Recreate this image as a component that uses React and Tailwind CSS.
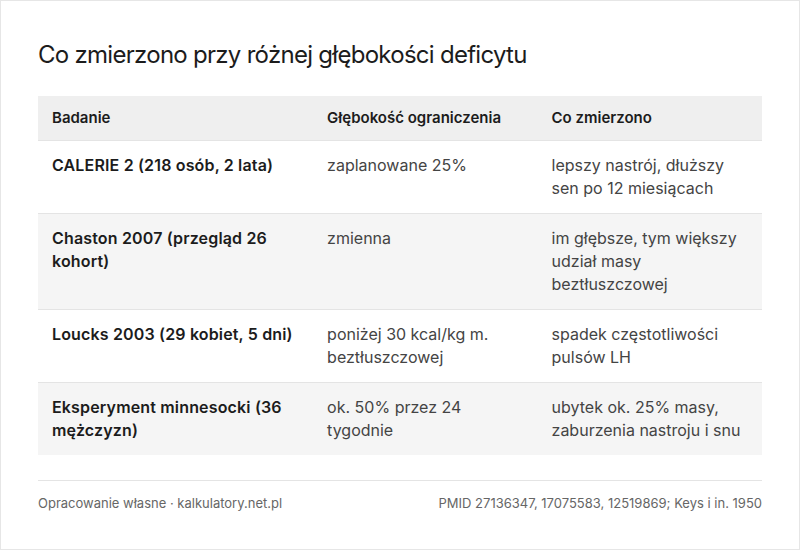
const rows = [
    {
        study: "CALERIE 2 (218 osób, 2 lata)",
        depth: "zaplanowane 25%",
        result: "lepszy nastrój, dłuższy sen po 12 miesiącach",
    },
    {
        study: "Chaston 2007 (przegląd 26 kohort)",
        depth: "zmienna",
        result: "im głębsze, tym większy udział masy beztłuszczowej",
    },
    {
        study: "Loucks 2003 (29 kobiet, 5 dni)",
        depth: "poniżej 30 kcal/kg m. beztłuszczowej",
        result: "spadek częstotliwości pulsów LH",
    },
    {
        study: "Eksperyment minnesocki (36 mężczyzn)",
        depth: "ok. 50% przez 24 tygodnie",
        result: "ubytek ok. 25% masy, zaburzenia nastroju i snu",
    },
];

export default function App() {
    return (
        <div className="w-[800px] h-[551px] bg-white font-['Inter',sans-serif]">
            <div className="h-[550px] border border-[#e6e6e6] px-[37px] pt-[38px]">
                <h1 className="text-[24px] leading-8 tracking-[-0.03em] text-[#1c1c1c] mb-[25px]">
                    Co zmierzono przy różnej głębokości deficytu
                </h1>

                <table className="w-full table-fixed border-collapse text-left">
                    <colgroup>
                        <col className="w-[38%]" />
                        <col className="w-[31%]" />
                        <col className="w-[31%]" />
                    </colgroup>
                    <thead>
                        <tr className="bg-[#efefef] border-b border-[#e4e4e4]">
                            <th className="px-[14px] py-[11px] text-[15px] leading-[22px] font-semibold text-[#1c1c1c]">Badanie</th>
                            <th className="px-[14px] py-[11px] text-[15px] leading-[22px] font-semibold text-[#1c1c1c]">Głębokość ograniczenia</th>
                            <th className="px-[14px] py-[11px] text-[15px] leading-[22px] font-semibold text-[#1c1c1c]">Co zmierzono</th>
                        </tr>
                    </thead>
                    <tbody>
                        {rows.map((row, i) => (
                            <tr
                                key={row.study}
                                className={`${i % 2 === 1 ? "bg-[#f5f5f5]" : "bg-white"} ${i < rows.length - 1 ? "border-b border-[#e4e4e4]" : ""}`}
                            >
                                <td className="align-top px-[14px] py-[13px] text-[16px] leading-[23px] font-semibold tracking-[0.01em] text-[#1c1c1c]">{row.study}</td>
                                <td className="align-top px-[14px] py-[13px] text-[16px] leading-[23px] text-[#444444]">{row.depth}</td>
                                <td className="align-top px-[14px] py-[13px] text-[16px] leading-[23px] text-[#444444]">{row.result}</td>
                            </tr>
                        ))}
                    </tbody>
                </table>

                <div className="mt-[25px] border-t border-[#e4e4e4] pt-[12px] flex justify-between text-[13px] leading-5 text-[#666666]">
                    <span>Opracowanie własne · kalkulatory.net.pl</span>
                    <span>PMID 27136347, 17075583, 12519869; Keys i in. 1950</span>
                </div>
            </div>
        </div>
    );
}
